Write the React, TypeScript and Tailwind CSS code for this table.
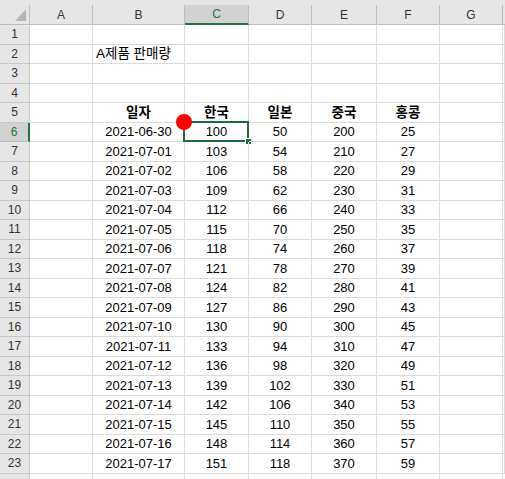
import React from "react";

const COLS = ["A", "B", "C", "D", "E", "F", "G"];

const rows = Array.from({ length: 18 }, (_, i) => {
  const d = new Date(Date.UTC(2021, 5, 30 + i));
  const date = d.toISOString().slice(0, 10);
  return [date, 100 + 3 * i, 50 + 4 * i, 200 + 10 * i, 25 + 2 * i];
});

const font = "font-['Liberation_Sans','Noto_Sans_CJK_KR',sans-serif]";
const grid = "grid grid-cols-[30px_63px_92px_64px_63px_65px_63px_63px_1fr]";

function Cell({
  children,
  className = "",
}: {
  children?: React.ReactNode;
  className?: string;
}) {
  return (
    <div
      className={`relative h-[19.5px] border-b border-r border-[#dadada] flex items-center text-[13px] text-black leading-none ${className}`}
    >
      {children}
    </div>
  );
}

function RowHead({ n, active }: { n: number; active?: boolean }) {
  return (
    <div
      className={`h-[19.5px] border-b border-r flex items-center justify-center text-[12px] leading-none ${
        active
          ? "bg-[#d2d2d2] text-[#217346] border-r-2 border-r-[#217346] border-b-[#bdbdbd]"
          : "bg-[#e6e6e6] text-[#333] border-[#c8c8c8]"
      }`}
    >
      {n}
    </div>
  );
}

export default function App() {
  const labels = ["일자", "한국", "일본", "중국", "홍콩"];

  return (
    <div className={`relative w-[505px] h-[479px] overflow-hidden bg-white ${font}`}>
      <div className="h-[5px] bg-[#e6e6e6]" />
      <div className={grid}>
        {/* column headers */}
        <div className="relative h-[20px] bg-[#e6e6e6] border-r border-b border-[#bdbdbd]">
          <svg className="absolute right-[3px] bottom-[3px]" width="11" height="12" viewBox="0 0 11 12">
            <polygon points="11,0 11,12 0,12" fill="#b4b4b4" />
          </svg>
        </div>
        {COLS.map((c) => (
          <div
            key={c}
            className={`h-[20px] flex items-center justify-center text-[12px] leading-none border-r ${
              c === "C"
                ? "bg-[#d2d2d2] text-[#217346] border-b-2 border-b-[#217346] border-r-[#bdbdbd]"
                : "bg-[#e6e6e6] text-[#333] border-b border-[#bdbdbd]"
            }`}
          >
            {c}
          </div>
        ))}
        <div className="h-[20px] bg-[#e6e6e6] border-b border-[#bdbdbd]" />

        {/* rows 1-5 */}
        {[1, 2, 3, 4, 5].map((n) => (
          <React.Fragment key={n}>
            <RowHead n={n} />
            <Cell />
            <Cell className="overflow-visible whitespace-nowrap">
              {n === 2 && <span className="pl-[3px] text-[13.5px]">A제품 판매량</span>}
              {n === 5 && <span className="w-full text-center font-bold text-[13.5px]">{labels[0]}</span>}
            </Cell>
            {labels.slice(1).map((l, i) => (
              <Cell key={i} className="justify-center">
                {n === 5 && <span className="font-bold text-[13.5px]">{l}</span>}
              </Cell>
            ))}
            <Cell />
            <Cell />
          </React.Fragment>
        ))}

        {/* data rows */}
        {rows.map((r, i) => (
          <React.Fragment key={i}>
            <RowHead n={i + 6} active={i === 0} />
            <Cell />
            {r.map((v, j) => (
              <Cell key={j} className="justify-center">
                {v}
                {i === 0 && j === 1 && (
                  <div className="absolute left-[-2px] top-[-2px] right-[-1px] bottom-[-1px] border-2 border-[#1e6b41]">
                    <div className="absolute right-[-5px] bottom-[-5px] w-[7px] h-[7px] bg-[#1e6b41] border border-white" />
                  </div>
                )}
              </Cell>
            ))}
            <Cell />
            <Cell />
          </React.Fragment>
        ))}

        {/* partial row 24 */}
        <div className="h-[19.5px] bg-[#e6e6e6] border-r border-[#c8c8c8]" />
        {COLS.map((c) => (
          <div key={c} className="h-[19.5px] border-r border-[#dadada]" />
        ))}
        <div />
      </div>

      {/* red marker */}
      <div className="absolute left-[176px] top-[114px] w-[16px] h-[16px] rounded-full bg-[#ff0000]" />
    </div>
  );
}
